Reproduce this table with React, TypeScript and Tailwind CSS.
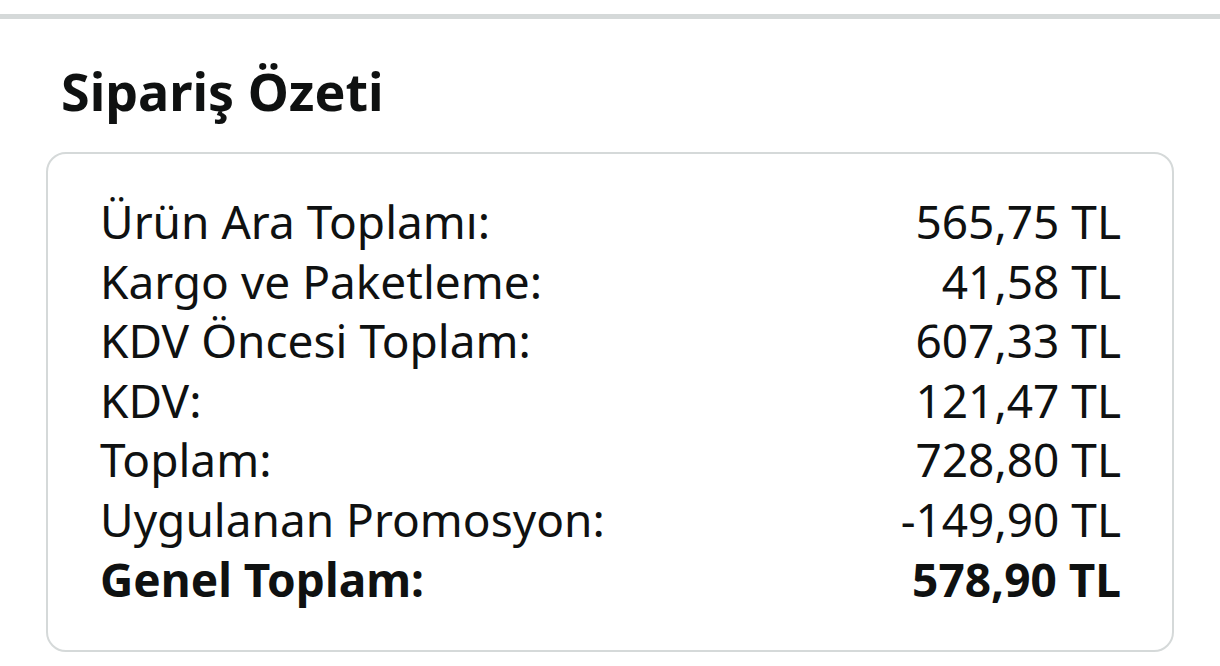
import React from "react";

const rows = [
  { label: "Ürün Ara Toplamı:", value: "565,75 TL" },
  { label: "Kargo ve Paketleme:", value: "41,58 TL" },
  { label: "KDV Öncesi Toplam:", value: "607,33 TL" },
  { label: "KDV:", value: "121,47 TL" },
  { label: "Toplam:", value: "728,80 TL" },
  { label: "Uygulanan Promosyon:", value: "-149,90 TL" },
];

export default function App() {
  return (
    <div
      className="w-[1220px] h-[666px] bg-white text-[#0f1111] overflow-hidden"
      style={{ fontFamily: '"Noto Sans", "Liberation Sans", sans-serif' }}
    >
      <div className="pt-[14px]">
        <div className="h-[5px] bg-[#d5d9d9]" />
      </div>
      <div className="px-[46px]">
        <h2 className="pl-[15px] pt-[40px] text-[52px] leading-[64px] font-bold">
          Sipariş Özeti
        </h2>
        <div className="mt-[29px] w-[1128px] h-[500px] rounded-[20px] border-2 border-[#d5d9d9] pl-[52px] pr-[51px] pt-[38px]">
          {rows.map((r) => (
            <div
              key={r.label}
              className="flex justify-between text-[46px] leading-[59.6px]"
            >
              <span>{r.label}</span>
              <span>{r.value}</span>
            </div>
          ))}
          <div className="flex justify-between text-[46px] leading-[59.6px] font-bold">
            <span>Genel Toplam:</span>
            <span>578,90 TL</span>
          </div>
        </div>
      </div>
    </div>
  );
}
